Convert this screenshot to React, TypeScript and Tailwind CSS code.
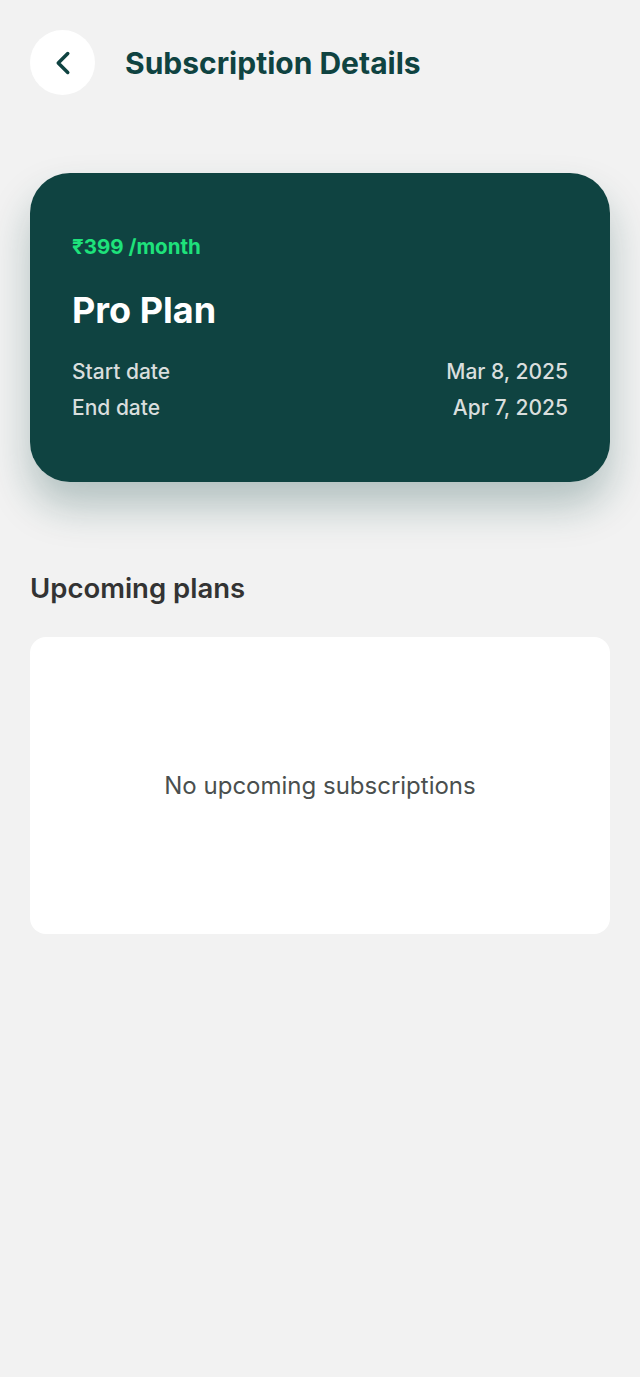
import { ChevronLeft } from "lucide-react";

const plan = {
  price: "₹399 /month",
  name: "Pro Plan",
  start: "Mar 8, 2025",
  end: "Apr 7, 2025",
};

export default function App() {
  return (
    <div
      className="min-h-[1377px] w-full bg-[#f2f2f2] px-[30px] pt-[30px]"
      style={{ fontFamily: "Inter, 'Noto Sans', sans-serif" }}
    >
      <header className="flex items-center gap-[30px]">
        <button className="flex h-[65px] w-[65px] items-center justify-center rounded-full bg-white text-[#0f4341]">
          <ChevronLeft size={38} strokeWidth={2.2} />
        </button>
        <h1 className="text-[30px] font-bold leading-[36px] text-[#0f4341]">
          Subscription Details
        </h1>
      </header>

      <section className="mt-[78px] rounded-[40px] bg-[#0f4341] px-[42px] pt-[60px] pb-[60px] shadow-[0_24px_40px_rgba(15,67,65,0.28)]">
        <p className="text-[20.5px] font-bold leading-[28px] text-[#1ee27b]">
          {plan.price}
        </p>
        <h2 className="mt-[29px] text-[36px] font-bold leading-[40px] text-white">
          {plan.name}
        </h2>
        <div className="mt-[28px] space-y-[8px] text-[21px] font-medium leading-[28px] text-[#d9dedd]">
          <div className="flex justify-between">
            <span>Start date</span>
            <span>{plan.start}</span>
          </div>
          <div className="flex justify-between">
            <span>End date</span>
            <span>{plan.end}</span>
          </div>
        </div>
      </section>

      <h3 className="mt-[90px] text-[27.5px] font-semibold leading-[32px] text-[#333333]">
        Upcoming plans
      </h3>
      <div className="mt-[33px] flex h-[297px] items-center justify-center rounded-[16px] bg-white">
        <p className="text-[24px] leading-[30px] text-[#4a4f4e]">
          No upcoming subscriptions
        </p>
      </div>
    </div>
  );
}
